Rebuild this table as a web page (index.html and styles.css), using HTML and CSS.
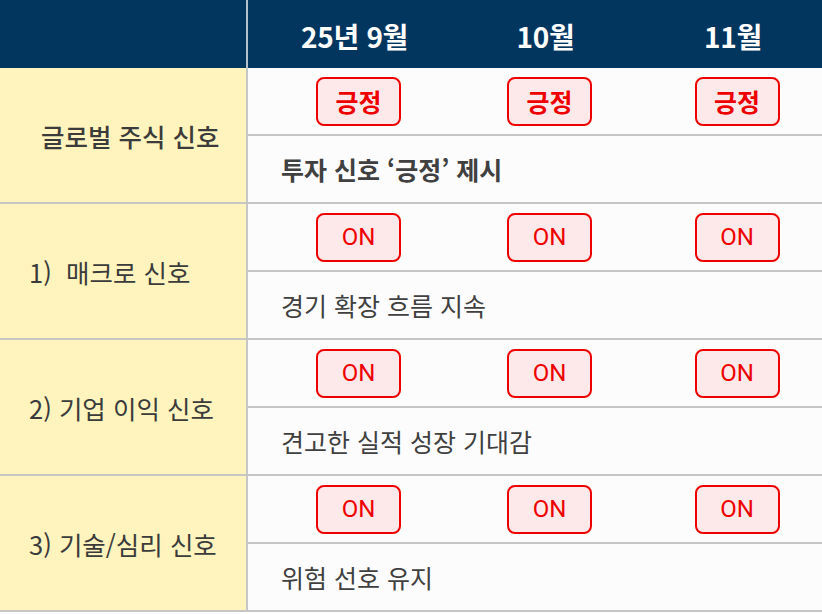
FILE: index.html
```html
<!DOCTYPE html>
<html lang="ko">
<head>
<meta charset="utf-8">
<title>글로벌 주식 신호</title>
<link rel="stylesheet" href="styles.css">
</head>
<body>
<div class="sheet">
  <div class="head">
    <div class="head-corner"></div>
    <div class="head-cell">25년 9월</div>
    <div class="head-cell">10월</div>
    <div class="head-cell">11월</div>
  </div>

  <div class="group">
    <div class="label label-main">글로벌 주식 신호</div>
    <div class="data">
      <div class="badges">
        <div class="slot"><span class="badge badge-strong">긍정</span></div>
        <div class="slot"><span class="badge badge-strong">긍정</span></div>
        <div class="slot"><span class="badge badge-strong">긍정</span></div>
      </div>
      <div class="desc desc-strong">투자 신호 ‘긍정’ 제시</div>
    </div>
  </div>

  <div class="group">
    <div class="label">1)&nbsp; 매크로 신호</div>
    <div class="data">
      <div class="badges">
        <div class="slot"><span class="badge">ON</span></div>
        <div class="slot"><span class="badge">ON</span></div>
        <div class="slot"><span class="badge">ON</span></div>
      </div>
      <div class="desc">경기 확장 흐름 지속</div>
    </div>
  </div>

  <div class="group">
    <div class="label">2) 기업 이익 신호</div>
    <div class="data">
      <div class="badges">
        <div class="slot"><span class="badge">ON</span></div>
        <div class="slot"><span class="badge">ON</span></div>
        <div class="slot"><span class="badge">ON</span></div>
      </div>
      <div class="desc">견고한 실적 성장 기대감</div>
    </div>
  </div>

  <div class="group">
    <div class="label">3) 기술/심리 신호</div>
    <div class="data">
      <div class="badges">
        <div class="slot"><span class="badge">ON</span></div>
        <div class="slot"><span class="badge">ON</span></div>
        <div class="slot"><span class="badge">ON</span></div>
      </div>
      <div class="desc">위험 선호 유지</div>
    </div>
  </div>
</div>
</body>
</html>
```

FILE: styles.css
```css
html, body {
  margin: 0;
  padding: 0;
  overflow: hidden;
  background: #ffffff;
}

body {
  font-family: "Noto Sans CJK KR", "Noto Sans", sans-serif;
  color: #3a3a3a;
}

.sheet {
  width: 844px;
  display: flex;
  flex-direction: column;
}

.head {
  display: grid;
  grid-template-columns: 248px 221px 161px 214px;
  height: 68px;
  background: #02365f;
}

.head-corner {
  border-right: 2px solid #b6c0cb;
}

.head-cell {
  display: flex;
  align-items: center;
  justify-content: center;
  padding: 3px 8px 0 0;
  color: #ffffff;
  font-weight: 700;
  font-size: 28px;
  letter-spacing: -0.3px;
}

.group {
  display: grid;
  grid-template-columns: 248px 1fr;
  border-bottom: 2px solid #c6c6c6;
}

.label {
  display: flex;
  align-items: center;
  padding-left: 29px;
  background: #fff4bd;
  border-right: 2px solid #c6c6c6;
  font-size: 25.5px;
  color: #3b3b3b;
}

.label-main {
  padding-left: 41px;
  font-weight: 500;
}

.data {
  display: flex;
  flex-direction: column;
  background: #fcfcfc;
}

.badges {
  display: grid;
  grid-template-columns: 221px 161px 214px;
  height: 66px;
  border-bottom: 2px solid #c6c6c6;
  align-items: center;
}

.slot {
  display: flex;
  justify-content: center;
}

.badge {
  box-sizing: border-box;
  width: 85px;
  height: 49px;
  display: flex;
  align-items: center;
  justify-content: center;
  border: 2px solid #ee0000;
  border-radius: 8px;
  background: #fde9ea;
  color: #ee0000;
  font-family: Roboto, "Noto Sans CJK KR", sans-serif;
  font-size: 24px;
}

.badge-strong {
  font-family: "Noto Sans CJK KR", sans-serif;
  font-weight: 700;
  font-size: 25px;
}

.desc {
  height: 66px;
  display: flex;
  align-items: center;
  padding-left: 33px;
  font-size: 25px;
  color: #404040;
}

.desc-strong {
  font-weight: 700;
}
```
